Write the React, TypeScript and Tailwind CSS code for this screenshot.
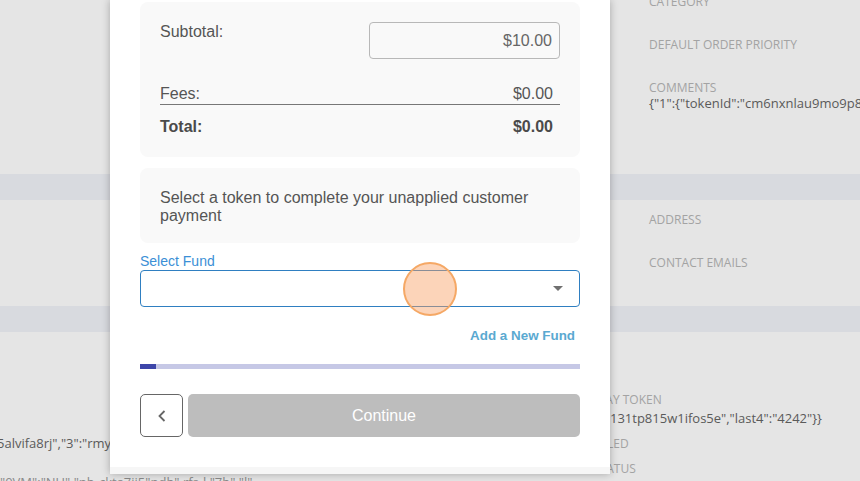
import React from 'react'

const Label = ({ children, className = '' }: { children: React.ReactNode; className?: string }) => (
  <div className={`text-[12px] leading-[14px] uppercase text-[#a3a3a3] whitespace-nowrap ${className}`}>{children}</div>
)

const Value = ({ children, className = '' }: { children: React.ReactNode; className?: string }) => (
  <div className={`text-[13px] leading-[14px] text-[#5a5a5a] whitespace-nowrap ${className}`}>{children}</div>
)

const Background = () => {
  return (
    <div className="flex flex-col font-['Open_Sans',sans-serif]">
      {/* top section */}
      <div className="h-[174px] flex flex-col pl-[649px]">
        <Label className="-mt-[5px] h-[43px]">Category</Label>
        <Label className="h-[43px]">Default Order Priority</Label>
        <Label>Comments</Label>
        <Value className="mt-[1px]">{'{"1":{"tokenId":"cm6nxnlau9mo9p8a0g2x","last4":"4242"}}'}</Value>
      </div>

      <div className="h-[26px] bg-[#d8dadf]" />

      <div className="h-[106px] flex flex-col pl-[649px] pt-[13px]">
        <Label className="h-[43px]">Address</Label>
        <Label>Contact Emails</Label>
      </div>

      <div className="h-[26px] bg-[#d8dadf]" />

      <div className="h-[149px] flex">
        <div className="w-[560px] flex flex-col pt-[104px] overflow-hidden">
          <Value className="-ml-[3px]">{'5alvifa8rj","3":"rmyq7x1c9n0k"}}'}</Value>
          <Value className="mt-[25px] text-[#8a8a8a]">{'"0VM":"NU" "nb-ckta7ii5"ndb"  rfs-l  "7b"  "l"'}</Value>
        </div>
        <div className="flex flex-col pt-[61px]">
          <Label>Apple Pay Token</Label>
          <div className="flex justify-end w-[262px] mt-[4px]">
            <Value>{'{"1":{"tokenId":"cm6nxp0a5000131tp815w1ifos5e","last4":"4242"}}'}</Value>
          </div>
          <Label className="mt-[12px]">Is Disabled</Label>
          <Label className="mt-[11px]">Sync Status</Label>
        </div>
      </div>
    </div>
  )
}

const Modal = () => {
  return (
    <div className="absolute left-[110px] top-0 w-[500px] h-[474px] bg-white shadow-[0_0_8px_rgba(0,0,0,0.28)] flex flex-col font-['Liberation_Sans',Arial,sans-serif] text-[#555]">
      <div className="px-[30px] pt-[2px] flex flex-col">
        {/* totals card */}
        <div className="rounded-lg bg-[#f9f9f9] px-5 pt-5 pb-5 flex flex-col">
          <div className="flex justify-between items-start">
            <span className="text-[16px] leading-5">Subtotal:</span>
            <div className="w-[191px] h-[37px] border border-[#b8b8b8] rounded-[4px] flex items-center justify-end pr-[7px] text-[16px] leading-5 text-[#666]">
              $10.00
            </div>
          </div>
          <div className="mt-[25px] flex justify-between border-b border-[#777] text-[16px] leading-5">
            <span>Fees:</span>
            <span className="pr-[7px]">$0.00</span>
          </div>
          <div className="mt-[12px] flex justify-between text-[16px] leading-5 font-bold text-[#4a4a4a]">
            <span>Total:</span>
            <span className="pr-[7px]">$0.00</span>
          </div>
        </div>

        {/* message card */}
        <div className="mt-[11px] rounded-lg bg-[#f9f9f9] px-5 pt-[21px] pb-[18px] text-[16px] leading-[18px]">
          Select a token to complete your unapplied customer payment
        </div>

        <div className="mt-[10px] text-[14px] leading-4 text-[#3b8fd6]">Select Fund</div>
        <div className="mt-[1px] h-[37px] border border-[#2f7fc1] rounded-[4px] flex items-center justify-end pr-[16px]">
          <svg width="10" height="5" viewBox="0 0 10 5">
            <path d="M0 0 L10 0 L5 5 Z" fill="#707070" />
          </svg>
        </div>

        <div className="mt-[21px] flex justify-end pr-[5px] text-[13.4px] leading-4 font-bold text-[#5aa9d1]">
          Add a New Fund
        </div>

        <div className="mt-[20px] h-[5px] bg-[#c6c8e6]">
          <div className="h-full w-[16px] bg-[#3d46a9]" />
        </div>

        <div className="mt-[25px] flex gap-[5px] h-[43px]">
          <button className="w-[43px] h-full border border-[#666] rounded-[5px] flex items-center justify-center bg-white">
            <svg width="8" height="12" viewBox="0 0 8 12">
              <polyline points="6.5,1 1.5,6 6.5,11" fill="none" stroke="#666" strokeWidth="1.8" />
            </svg>
          </button>
          <button className="flex-1 h-full rounded-[5px] bg-[#bdbdbd] text-white text-[16px] flex items-center justify-center">
            Continue
          </button>
        </div>
      </div>
      <div className="mt-auto h-[7px] bg-[#f6f6f6]" />
    </div>
  )
}

export default function App() {
  return (
    <div className="relative w-[860px] h-[481px] overflow-hidden bg-[#e5e5e5]">
      <Background />
      <Modal />
      <div className="absolute left-[403px] top-[262px] w-[54px] h-[54px] rounded-full bg-[rgba(249,160,100,0.45)] border-2 border-[#f5a865]" />
    </div>
  )
}
